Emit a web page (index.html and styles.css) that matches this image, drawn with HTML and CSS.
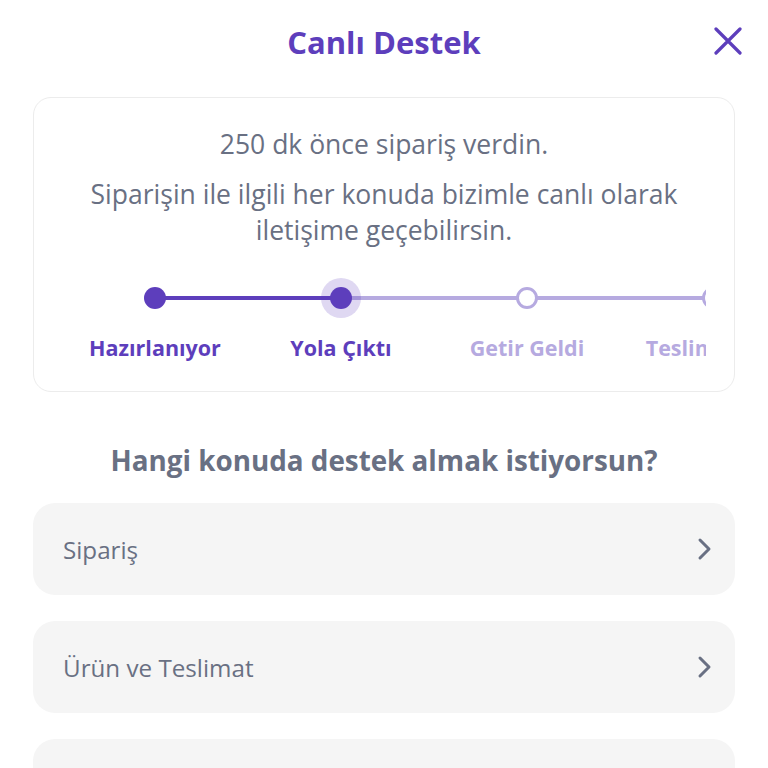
FILE: index.html
```html
<!DOCTYPE html>
<html lang="tr">
<head>
    <meta charset="UTF-8">
    <meta name="viewport" content="width=device-width, initial-scale=1.0">
    <title>Canlı Destek</title>
    <link rel="stylesheet" href="styles.css">
</head>
<body>

<div class="page">
    <header class="top-bar">
        <h1>Canlı Destek</h1>
        <button class="close-btn" aria-label="Kapat">
            <svg width="28" height="28" viewBox="0 0 28 28">
                <path d="M2 2 L26 26 M26 2 L2 26" stroke="#5d3ebc" stroke-width="3.2" stroke-linecap="round" fill="none"/>
            </svg>
        </button>
    </header>

    <div class="order-card">
        <p class="order-time">250 dk önce sipariş verdin.</p>
        <p class="order-note">Siparişin ile ilgili her konuda bizimle canlı olarak iletişime geçebilirsin.</p>

        <div class="stepper">
            <div class="step done">
                <div class="track"><span class="dot"></span></div>
                <span class="label">Hazırlanıyor</span>
            </div>
            <div class="step current">
                <div class="track"><span class="dot"></span></div>
                <span class="label">Yola Çıktı</span>
            </div>
            <div class="step todo">
                <div class="track"><span class="dot"></span></div>
                <span class="label">Getir Geldi</span>
            </div>
            <div class="step todo last">
                <div class="track"><span class="dot"></span></div>
                <span class="label">Teslim Edildi</span>
            </div>
        </div>
    </div>

    <h2 class="topic-title">Hangi konuda destek almak istiyorsun?</h2>

    <ul class="topics">
        <li class="topic">
            <span>Sipariş</span>
            <svg width="16" height="24" viewBox="0 0 16 24"><path d="M3 3 L12 12 L3 21" stroke="#697083" stroke-width="3" stroke-linecap="round" stroke-linejoin="round" fill="none"/></svg>
        </li>
        <li class="topic">
            <span>Ürün ve Teslimat</span>
            <svg width="16" height="24" viewBox="0 0 16 24"><path d="M3 3 L12 12 L3 21" stroke="#697083" stroke-width="3" stroke-linecap="round" stroke-linejoin="round" fill="none"/></svg>
        </li>
        <li class="topic">
            <span>Ödeme</span>
            <svg width="16" height="24" viewBox="0 0 16 24"><path d="M3 3 L12 12 L3 21" stroke="#697083" stroke-width="3" stroke-linecap="round" stroke-linejoin="round" fill="none"/></svg>
        </li>
    </ul>
</div>

</body>
</html>
```

FILE: styles.css
```css
* {
    margin: 0;
    padding: 0;
    box-sizing: border-box;
}

body {
    font-family: 'Open Sans', 'Noto Sans', sans-serif;
    background-color: #fff;
    color: #697083;
    overflow: hidden;
}

.page {
    padding: 0 33px;
}

.top-bar {
    height: 84px;
    display: flex;
    align-items: center;
    justify-content: center;
    position: relative;
}

.top-bar h1 {
    font-size: 31px;
    font-weight: 700;
    color: #5d3ebc;
}

.close-btn {
    position: absolute;
    right: -7px;
    top: 27px;
    background: none;
    border: none;
    display: flex;
}

.order-card {
    margin-top: 13px;
    border: 1px solid #ececec;
    border-radius: 18px;
    padding: 28px 28px 0;
    height: 295px;
    text-align: center;
}

.order-time {
    font-size: 26.5px;
    line-height: 36px;
}

.order-note {
    margin-top: 14px;
    font-size: 26.5px;
    line-height: 36px;
}

/* Sipariş durumu */
.stepper {
    display: flex;
    overflow: hidden;
    margin-top: 30px;
}

.step {
    flex: 0 0 186px;
    display: flex;
    flex-direction: column;
    align-items: center;
}

.track {
    position: relative;
    width: 100%;
    height: 40px;
    display: flex;
    align-items: center;
    justify-content: center;
}

.track::before,
.track::after {
    content: "";
    position: absolute;
    top: 18px;
    height: 4px;
    width: 50%;
    background-color: #b6aae0;
}

.track::before {
    left: 0;
}

.track::after {
    right: 0;
}

.step:first-child .track::before {
    display: none;
}

.step.done .track::after,
.step.current .track::before {
    background-color: #5d3ebc;
}

.dot {
    position: relative;
    z-index: 1;
    width: 22px;
    height: 22px;
    border-radius: 50%;
    background-color: #5d3ebc;
}

.step.current .dot {
    box-shadow: 0 0 0 9px rgba(93, 62, 188, 0.2);
}

.step.todo .dot {
    background-color: #fff;
    border: 3px solid #b6aae0;
}

.label {
    margin-top: 15px;
    font-size: 21.5px;
    font-weight: 700;
    color: #5d3ebc;
    white-space: nowrap;
}

.step.todo .label {
    color: #b6aae0;
}

.topic-title {
    margin-top: 49px;
    text-align: center;
    font-size: 27.8px;
    font-weight: 700;
    color: #697083;
}

.topics {
    list-style: none;
    margin-top: 24px;
    display: flex;
    flex-direction: column;
    gap: 26px;
}

.topic {
    height: 92px;
    background-color: #f5f5f5;
    border-radius: 22px;
    padding: 0 22px 0 30px;
    display: flex;
    align-items: center;
    justify-content: space-between;
    font-size: 24.2px;
}
```
